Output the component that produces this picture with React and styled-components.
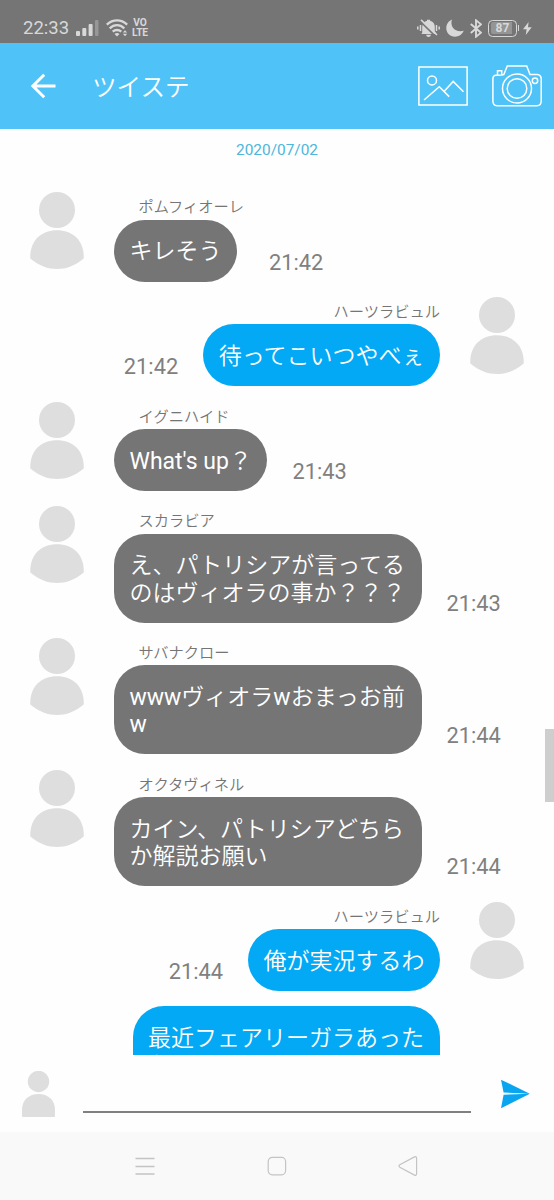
import React from "react";
import styled, { createGlobalStyle } from "styled-components";

const Global = createGlobalStyle`
  *, *::before, *::after { box-sizing: border-box; }
  body { margin: 0; background: #fefefe; font-family: Roboto, "Noto Sans CJK JP", sans-serif; }
  svg { display: block; flex: none; }
`;

const Screen = styled.div`
  display: flex;
  flex-direction: column;
  width: 554px;
  height: 1200px;
  overflow: hidden;
`;

const StatusBar = styled.header`
  display: flex;
  justify-content: space-between;
  flex: none;
  height: 43px;
  padding: 15px 22px 0 23px;
  background: #757575;
  color: #d8d8d8;
`;

const StatusGroup = styled.div`
  display: flex;
  align-items: center;
  height: 26px;
  gap: ${(p) => p.$gap}px;
`;

const Clock = styled.span`
  width: 46px;
  font-size: 18.5px;
  line-height: 27px;
  white-space: nowrap;
`;

const Volte = styled.span`
  display: flex;
  flex-direction: column;
  align-items: center;
  margin-left: -3px;
  font-size: 10.2px;
  font-weight: 700;
  letter-spacing: -0.2px;
  line-height: 10px;
`;

const Battery = styled.span`
  display: flex;
  position: relative;
  width: 29px;
  height: 17px;
  padding: 1.5px;
  border: 1.5px solid #d8d8d8;
  border-radius: 4.5px;
  &::after {
    content: "";
    position: absolute;
    right: -3px;
    top: 4px;
    width: 1.5px;
    height: 6px;
    background: #d8d8d8;
  }
`;

const Charge = styled.span`
  flex: 1;
  border-radius: 2px;
  background: linear-gradient(90deg, #959595 86%, transparent 86%);
  font-size: 12px;
  font-weight: 700;
  line-height: 12px;
  text-align: center;
`;

const AppBar = styled.div`
  display: flex;
  align-items: center;
  flex: none;
  height: 86px;
  padding: 0 12px 0 30px;
  background: #4fc3f7;
  color: #fff;
`;

const Title = styled.h1`
  flex: 1;
  margin: 3px 0 0 35px;
  font-size: 24.6px;
  font-weight: 350;
  line-height: 36px;
`;

const AppActions = styled.div`
  display: flex;
  align-items: center;
  gap: 24px;
`;

const Chat = styled.main`
  position: relative;
  flex: none;
  height: 926px;
  overflow: hidden;
`;

const DateLabel = styled.div`
  height: 63.4px;
  padding-top: 11px;
  color: #4db6dc;
  font-size: 15.4px;
  line-height: 20px;
  text-align: center;
`;

const Messages = styled.div`
  display: flex;
  flex-direction: column;
  gap: 15.45px;
`;

const Row = styled.div`
  display: flex;
  flex-direction: ${(p) => (p.$own ? "row-reverse" : "row")};
  padding: 0 30px;
`;

const AvatarSlot = styled.div`
  flex: none;
  width: 84px;
  display: flex;
  justify-content: ${(p) => (p.$own ? "flex-end" : "flex-start")};
`;

const Column = styled.div`
  display: flex;
  flex-direction: column;
  align-items: ${(p) => (p.$own ? "flex-end" : "flex-start")};
  flex: none;
  max-width: 307.5px;
`;

const Name = styled.div`
  height: 27.4px;
  margin-left: ${(p) => (p.$own ? 0 : 24.5)}px;
  color: #757575;
  font-family: "Noto Sans CJK JP", sans-serif;
  font-size: 15.25px;
  font-weight: 350;
  line-height: 26.6px;
  white-space: nowrap;
`;

const Bubble = styled.div`
  padding: 18.7px 15.5px 15.9px;
  border-radius: 31px;
  background: ${(p) => (p.$own ? "#03a9f4" : "#757575")};
  color: #fff;
  font-size: 23px;
  font-weight: 350;
  line-height: 27.2px;
`;

const Latin = styled.span`
  font-weight: 400;
`;

const Time = styled.time`
  align-self: flex-end;
  margin: 0 25px 5.9px;
  color: #808080;
  font-size: 21.8px;
  line-height: 26px;
`;

const Scrollbar = styled.div`
  position: absolute;
  right: 0;
  top: 600px;
  width: 9px;
  height: 73px;
  background: #cecece;
`;

const Composer = styled.div`
  display: flex;
  flex: none;
  height: 77px;
  padding: 16px 23px 0 22px;
`;

const Field = styled.div`
  width: 388px;
  height: 42px;
  margin: 0 30px 0 28px;
  border-bottom: 2px solid #808080;
`;

const SendButton = styled.div`
  padding-top: 8px;
`;

const NavBar = styled.nav`
  display: flex;
  flex: 1;
  align-items: center;
  justify-content: space-between;
  padding: 0 136px 0 135px;
  background: #f9f9f9;
`;

const Avatar = () => (
  <svg width="54" height="77" viewBox="0 0 54 77" fill="#dedede">
    <circle cx="27" cy="18" r="18" />
    <path d="M0.3 66.5C-0.5 49 11 38.3 27 38.3S54.5 49 53.7 66.5C45 74 36 77 27 77S9 74 .3 66.5Z" />
  </svg>
);

const SmallAvatar = () => (
  <svg width="33" height="46" viewBox="0 0 33 46" fill="#dedede">
    <circle cx="16.5" cy="10.5" r="10.7" />
    <path d="M0 45V39C0 29 7 23 16.5 23S33 29 33 39V45Q33 46 32 46H1Q0 46 0 45Z" />
  </svg>
);

const Signal = () => (
  <svg width="23" height="16" viewBox="0 0 23 16" fill="currentColor">
    <rect x="0" y="11" width="4" height="5" rx="1" />
    <rect x="6.3" y="8" width="4" height="8" rx="1" />
    <rect x="12.6" y="4" width="4" height="12" rx="1" />
    <rect x="19" y="0" width="3.5" height="16" rx="1" opacity=".35" />
  </svg>
);

const Wifi = () => (
  <svg width="22" height="18" viewBox="0 0 22 18" fill="none" stroke="currentColor" strokeWidth="2.3">
    <path d="M.8 5.6Q5.5 1.4 11 1.4T21.2 5.6M3.7 9.3Q7 6.2 11 6.2T18.3 9.3M6.7 12.7Q8.6 11 11 11T15.3 12.7" />
    <path d="M8.5 15Q11 13 13.5 15L11 17.5Z" fill="currentColor" stroke="none" />
    <path d="M16.8 13.6L19 11.2L21.2 13.6ZM16.8 14.8L19 17.2L21.2 14.8Z" fill="currentColor" stroke="none" />
  </svg>
);

const Muted = () => (
  <svg width="23" height="18" viewBox="0 0 23 18" fill="currentColor">
    <path d="M5.2 14V8C5.2 4.5 7.5 2.4 10 1.8V.8H13V1.8C15.5 2.4 17.8 4.5 17.8 8V12L19.5 15H4.2ZM9 15.8H14Q13.5 18 11.5 18T9 15.8Z" />
    <path d="M3.5 2.6L18.5 17.4" stroke="#757575" strokeWidth="1.5" />
    <path d="M4 .8L20 16" stroke="currentColor" strokeWidth="1.6" />
    <path d="M3.5 6V12M.8 7.5V10.5M19.5 6V12M22.2 7.5V10.5" stroke="currentColor" strokeWidth="1.5" />
  </svg>
);

const Moon = () => (
  <svg width="18" height="18" viewBox="0 0 18 18" fill="currentColor">
    <path d="M6 .5C3.5 8 9.5 13.8 17.8 11.7C16 15.5 13 17.7 9 17.7C4 17.7.3 14 .3 9.2C.3 5.2 2.5 2 6 .5Z" />
  </svg>
);

const Bluetooth = () => (
  <svg width="12" height="19" viewBox="0 0 12 19" fill="none" stroke="currentColor" strokeWidth="1.9">
    <path d="M.8 5L11 13.7L6 17.7V1.3L11 5.3L.8 14" />
  </svg>
);

const Bolt = () => (
  <svg width="9" height="13" viewBox="0 0 9 13" fill="currentColor">
    <path d="M5.6 0L0 7.3H3.6L2.8 13L8.7 5.3H5Z" />
  </svg>
);

const Back = () => (
  <svg width="27" height="26" viewBox="0 0 27 26" fill="none" stroke="currentColor" strokeWidth="3">
    <path d="M25.5 13H3M14.2 1.7L2.9 13L14.2 24.3" />
  </svg>
);

const Picture = () => (
  <svg width="50" height="40" viewBox="0 0 50 40" fill="none" stroke="currentColor" strokeWidth="1.5">
    <rect x=".9" y="1" width="48.2" height="38" />
    <circle cx="14" cy="14.4" r="4.5" />
    <path d="M6 34L21.3 20.8L31.2 30.6M26 25.5L35.2 15.4L45.5 25.8" />
  </svg>
);

const Camera = () => (
  <svg width="50" height="42" viewBox="0 0 50 42" fill="none" stroke="currentColor" strokeWidth="1.5">
    <path d="M4 10.2H8L11.8 9.6L15.3 1H34.7L38 9.6H45Q49.2 10 49.2 14V36Q49.2 40.7 45 40.7H5Q.9 40.7 .9 36V14Q.9 10.2 4 10.2ZM5.5 10V5.8H9.7V10" />
    <circle cx="25" cy="23.5" r="14.5" />
    <circle cx="25" cy="23.5" r="9.8" />
    <circle cx="43" cy="15.8" r="2.7" />
  </svg>
);

const Send = () => (
  <svg width="29" height="30" viewBox="0 0 29 30" fill="#0aa5f0">
    <path d="M0 .7L28.8 14.7L2.6 13.6ZM0 29.3L28.8 14.7L2.6 15.8Z" />
  </svg>
);

const Menu = () => (
  <svg width="20" height="20" viewBox="0 0 20 20" stroke="#c4c4c4" strokeWidth="1.3">
    <path d="M.5 2.5H19.5M.5 10.5H19.5M.5 18H19.5" />
  </svg>
);

const Home = () => (
  <svg width="20" height="20" viewBox="0 0 20 20" fill="none" stroke="#c4c4c4" strokeWidth="1.2">
    <rect x="1.2" y="1.4" width="17.4" height="17.4" rx="4" />
  </svg>
);

const NavBack = () => (
  <svg width="20" height="20" viewBox="0 0 20 20" fill="none" stroke="#c4c4c4" strokeWidth="1.2">
    <path d="M16.5 .9L1.8 8.8Q.2 10 1.8 11.2L16.5 19.1Q18.5 19.8 18.6 17.8V2.2Q18.5 .2 16.5 .9Z" />
  </svg>
);

const messages = [
  { name: "ポムフィオーレ", text: "キレそう", time: "21:42" },
  { name: "ハーツラビュル", text: "待ってこいつやべぇ", time: "21:42", own: true },
  { name: "イグニハイド", text: "What's up？", time: "21:43" },
  { name: "スカラビア", text: "え、パトリシアが言ってるのはヴィオラの事か？？？", time: "21:43" },
  { name: "サバナクロー", text: "wwwヴィオラwおまっお前w", time: "21:44" },
  { name: "オクタヴィネル", text: "カイン、パトリシアどちらか解説お願い", time: "21:44" },
  { name: "ハーツラビュル", text: "俺が実況するわ", time: "21:44", own: true },
  { text: "最近フェアリーガラあったから", own: true },
];

// Latin runs are set one step heavier than the Japanese text around them.
const mixedText = (text) =>
  text
    .split(/([\x20-\x7e]+)/)
    .filter(Boolean)
    .map((part, i) => (/^[\x20-\x7e]/.test(part) ? <Latin key={i}>{part}</Latin> : part));

const Message = ({ name, text, time, own }) => (
  <Row $own={own}>
    <AvatarSlot $own={own}>{name && <Avatar />}</AvatarSlot>
    <Column $own={own}>
      {name && <Name $own={own}>{name}</Name>}
      <Bubble $own={own}>{mixedText(text)}</Bubble>
    </Column>
    {time && <Time>{time}</Time>}
  </Row>
);

export default function App() {
  return (
    <Screen>
      <Global />
      <StatusBar>
        <StatusGroup $gap={7}>
          <Clock>22:33</Clock>
          <Signal />
          <Wifi />
          <Volte>
            <span>VO</span>
            <span>LTE</span>
          </Volte>
        </StatusGroup>
        <StatusGroup $gap={6}>
          <Muted />
          <Moon />
          <Bluetooth />
          <Battery>
            <Charge>87</Charge>
          </Battery>
          <Bolt />
        </StatusGroup>
      </StatusBar>
      <AppBar>
        <Back />
        <Title>ツイステ</Title>
        <AppActions>
          <Picture />
          <Camera />
        </AppActions>
      </AppBar>
      <Chat>
        <DateLabel>2020/07/02</DateLabel>
        <Messages>
          {messages.map((m, i) => (
            <Message key={i} {...m} />
          ))}
        </Messages>
        <Scrollbar />
      </Chat>
      <Composer>
        <SmallAvatar />
        <Field />
        <SendButton>
          <Send />
        </SendButton>
      </Composer>
      <NavBar>
        <Menu />
        <Home />
        <NavBack />
      </NavBar>
    </Screen>
  );
}
